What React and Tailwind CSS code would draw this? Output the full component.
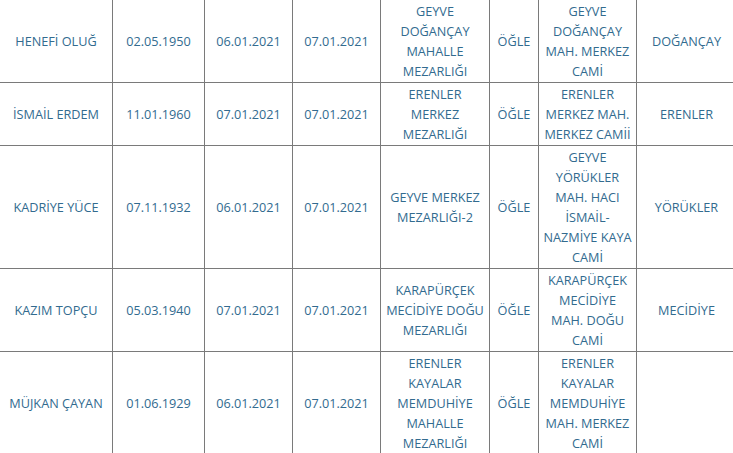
export default function App() {
  const rows = [
    ["HENEFİ OLUĞ", "02.05.1950", "06.01.2021", "07.01.2021", "GEYVE\nDOĞANÇAY\nMAHALLE\nMEZARLIĞI", "ÖĞLE", "GEYVE\nDOĞANÇAY\nMAH. MERKEZ\nCAMİ", "DOĞANÇAY"],
    ["İSMAİL ERDEM", "11.01.1960", "07.01.2021", "07.01.2021", "ERENLER\nMERKEZ\nMEZARLIĞI", "ÖĞLE", "ERENLER\nMERKEZ MAH.\nMERKEZ CAMİİ", "ERENLER"],
    ["KADRİYE YÜCE", "07.11.1932", "06.01.2021", "07.01.2021", "GEYVE MERKEZ\nMEZARLIĞI-2", "ÖĞLE", "GEYVE\nYÖRÜKLER\nMAH. HACI\nİSMAİL-\nNAZMİYE KAYA\nCAMİ", "YÖRÜKLER"],
    ["KAZIM TOPÇU", "05.03.1940", "07.01.2021", "07.01.2021", "KARAPÜRÇEK\nMECİDİYE DOĞU\nMEZARLIĞI", "ÖĞLE", "KARAPÜRÇEK\nMECİDİYE\nMAH. DOĞU\nCAMİ", "MECİDİYE"],
    ["MÜJKAN ÇAYAN", "01.06.1929", "06.01.2021", "07.01.2021", "ERENLER\nKAYALAR\nMEMDUHİYE\nMAHALLE\nMEZARLIĞI", "ÖĞLE", "ERENLER\nKAYALAR\nMEMDUHİYE\nMAH. MERKEZ\nCAMİ", ""],
  ];

  return (
    <div className="w-[733px] h-[453px] overflow-hidden bg-white" lang="tr">
      <table
        className="table-fixed border-collapse -mt-px -ml-px w-[737px] text-[12.7px] leading-5 text-[#326b8f] text-center uppercase"
        style={{ fontFamily: "'Open Sans', 'Liberation Sans', sans-serif" }}
      >
        <colgroup>
          <col className="w-[113px]" />
          <col className="w-[92px]" />
          <col className="w-[88px]" />
          <col className="w-[88px]" />
          <col className="w-[109px]" />
          <col className="w-[49px]" />
          <col className="w-[98px]" />
          <col className="w-[100px]" />
        </colgroup>
        <tbody>
          {rows.map((row, i) => (
            <tr key={i}>
              {row.map((cell, j) => (
                <td key={j} className="border border-[#7a7a7a] px-[2px] py-px align-middle whitespace-pre">
                  {cell}
                </td>
              ))}
            </tr>
          ))}
        </tbody>
      </table>
    </div>
  );
}
